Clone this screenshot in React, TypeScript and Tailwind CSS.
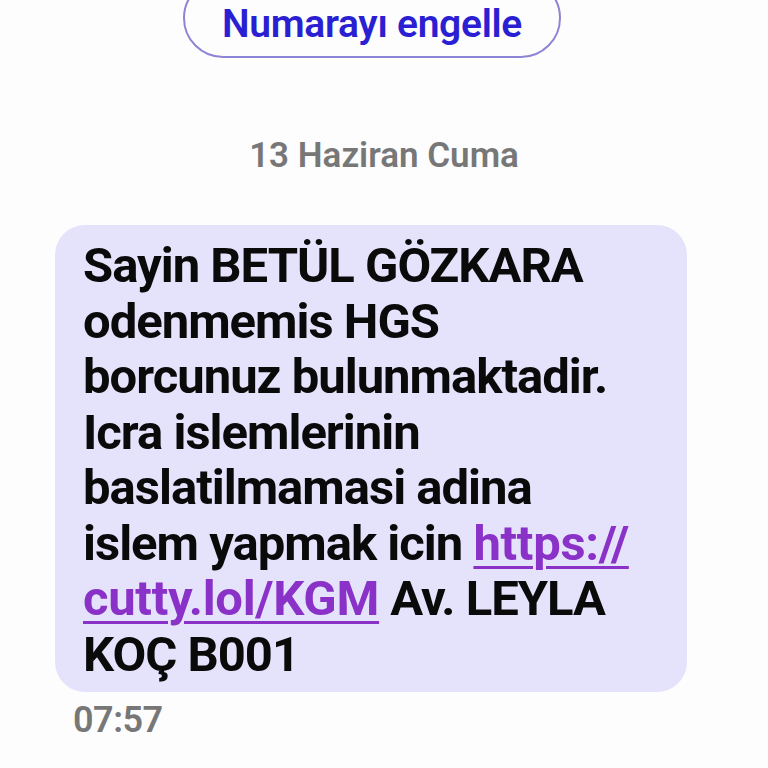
import React from "react";

export default function App() {
  return (
    <div
      className="w-[768px] h-[768px] overflow-hidden bg-[#fdfdfd] flex flex-col"
      style={{ fontFamily: "Roboto, 'Noto Sans', sans-serif" }}
    >
      <div className="flex justify-start pl-[183px]">
        <div className="mt-[-22px] h-[80px] w-[378px] rounded-full border-2 border-[#8c84d4] flex items-center justify-center pt-[12px]">
          <span className="text-[39px] leading-[44px] font-semibold text-[#2a1fd2] tracking-[-0.3px]">Numarayı engelle</span>
        </div>
      </div>
      <div className="mt-[78px] text-center text-[35px] leading-[40px] font-semibold text-[#777777]">
        13 Haziran Cuma
      </div>
      <div className="mt-[49px] ml-[55px] w-[632px] rounded-[30px] bg-[#e5e2fb] pl-[28px] pr-[12px] pt-[13px] pb-[10px]">
        <p className="text-[49px] leading-[55.5px] font-bold text-[#0a0a0a] tracking-[-1px]">
          Sayin BETÜL GÖZKARA<br />
          odenmemis HGS<br />
          borcunuz bulunmaktadir.<br />
          Icra islemlerinin<br />
          baslatilmamasi adina<br />
          islem yapmak icin{" "}
          <span className="text-[#8a32c8] underline decoration-[3px] underline-offset-[6px] tracking-[-0.3px]">
            https://
            <br />
            cutty.lol/KGM
          </span>{" "}
          Av. LEYLA<br />
          KOÇ B001
        </p>
      </div>
      <div className="mt-[8px] ml-[73px] text-[36px] leading-[40px] font-semibold text-[#777777] tracking-[-0.5px]">
        07:57
      </div>
    </div>
  );
}
